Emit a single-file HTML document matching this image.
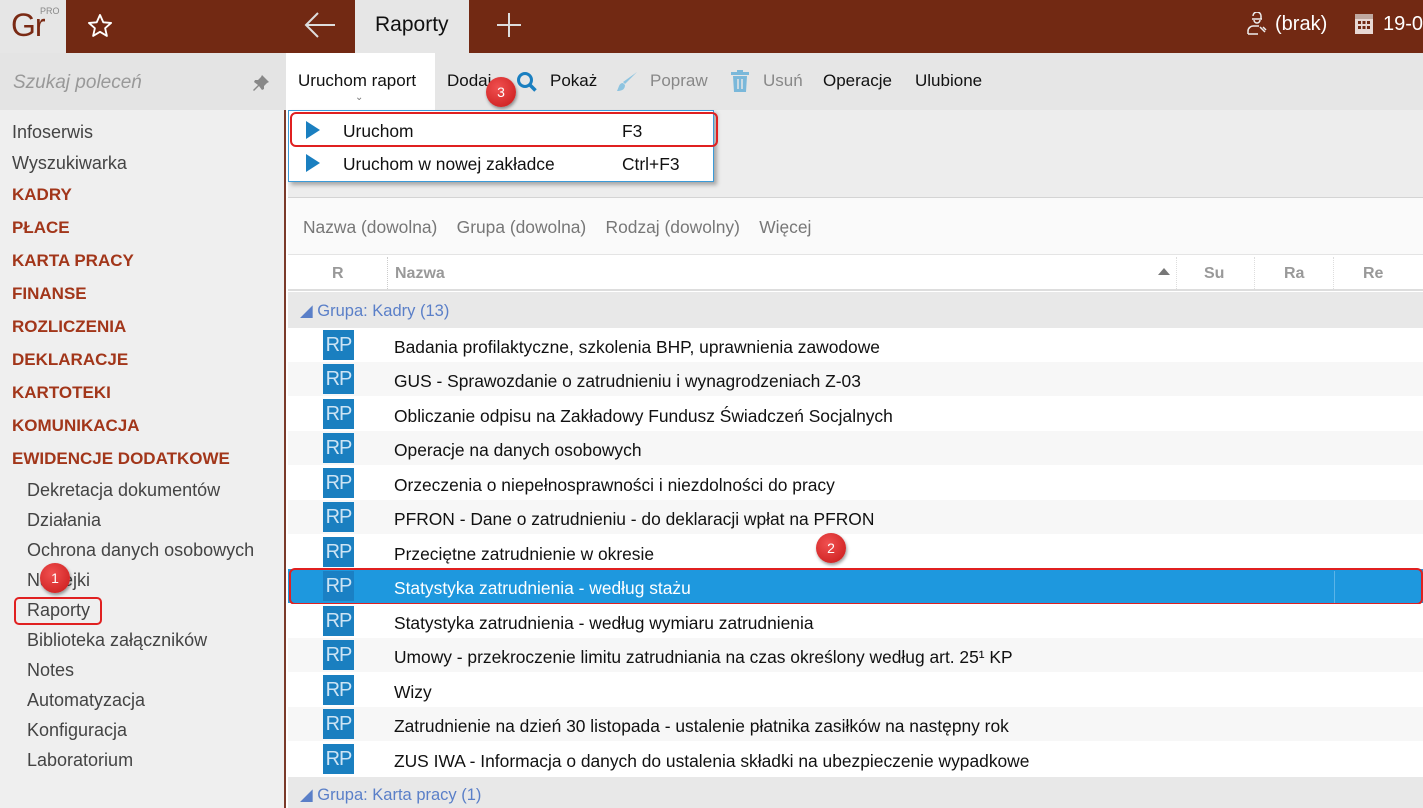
<!DOCTYPE html>
<html><head><meta charset="utf-8"><style>
*{margin:0;padding:0;box-sizing:border-box}
body{width:1423px;height:808px;overflow:hidden;font-family:"Liberation Sans",sans-serif;background:#fff;position:relative;font-size:17px;color:#111}
.a{position:absolute;white-space:nowrap}
.top{left:0;top:0;width:1423px;height:53px;background:#722913}
.side{left:0;top:53px;width:286px;height:755px;background:#efefef;border-right:2px solid #7a3a2a}
.si{position:absolute;left:12px;font-size:18px;color:#444}
.cat{color:#a2361a;font-weight:bold;font-size:17px}
.sub{left:27px}
.row{position:absolute;left:288px;width:1135px;height:34px}
.rp{position:absolute;left:35px;top:2px;width:31px;height:30px;background:#1a7fc0;color:#cde4f4;font-size:20px;text-align:center;line-height:30px;letter-spacing:-1px}
.rt{position:absolute;left:106px;top:9px;font-size:17.4px;color:#111}
.badge{position:absolute;width:30px;height:30px;border-radius:50%;background:radial-gradient(circle at 40% 35%,#f05050,#c81818);color:#fff;font-size:14px;text-align:center;line-height:30px;box-shadow:1px 2px 3px rgba(0,0,0,.4)}
</style></head><body>
<div class="a top"></div>
<div class="a" style="left:0;top:0;width:66px;height:53px;background:#e6e6e6"></div>
<div class="a" style="left:11px;top:7px;font-size:32px;color:#7a2a14;letter-spacing:-1px">Gr</div>
<div class="a" style="left:40px;top:6px;font-size:9px;color:#888">PRO</div>
<svg class="a" style="left:86px;top:12px" width="28" height="28" viewBox="0 0 24 24"><path d="M12 2.5l2.8 6.3 6.7.6-5.1 4.5 1.5 6.6L12 17l-5.9 3.5 1.5-6.6L2.5 9.4l6.7-.6z" fill="none" stroke="#fff" stroke-width="1.6" stroke-linejoin="round"/></svg>
<svg class="a" style="left:303px;top:11px" width="34" height="28" viewBox="0 0 34 28"><path d="M32 14H3M15 2L3 14l12 12" fill="none" stroke="#ddd" stroke-width="2"/></svg>
<div class="a" style="left:355px;top:0;width:114px;height:53px;background:#e6e6e6"></div>
<div class="a" style="left:375px;top:13px;font-size:21px;color:#111">Raporty</div>
<svg class="a" style="left:495px;top:11px" width="28" height="28"><path d="M14 2v24M2 14h24" stroke="#ddd" stroke-width="2"/></svg>
<svg class="a" style="left:1245px;top:12px" width="24" height="24" viewBox="0 0 24 24"><path d="M8 4a4 4 0 0 1 8 0v3M7 7h10M9 8a3 3 0 0 0 6 0M3 22v-3c0-3 3-5 5-5h6M3 22h10M15 15l5 5M18 15l3 3" fill="none" stroke="#eee" stroke-width="1.5"/></svg>
<div class="a" style="left:1275px;top:13px;font-size:20px;color:#fff">(brak)</div>
<svg class="a" style="left:1354px;top:13px" width="20" height="22"><rect x="1" y="1" width="18" height="20" fill="#e8d8d4"/><rect x="1" y="1" width="18" height="5" fill="#bfa8a0"/><g fill="#722913"><rect x="4" y="8" width="3" height="3"/><rect x="8.5" y="8" width="3" height="3"/><rect x="13" y="8" width="3" height="3"/><rect x="4" y="13" width="3" height="3"/><rect x="8.5" y="13" width="3" height="3"/><rect x="13" y="13" width="3" height="3"/></g></svg>
<div class="a" style="left:1383px;top:13px;font-size:20px;color:#fff">19-0</div>

<div class="a side"></div>
<div class="a" style="left:0;top:53px;width:286px;height:57px;background:#e4e4e4"></div>
<div class="a" style="left:13px;top:72px;font-size:19px;color:#999;font-style:italic">Szukaj poleceń</div>
<svg class="a" style="left:252px;top:74px" width="18" height="18" viewBox="0 0 18 18"><path d="M10 1l7 7-2 1-3 3 0 3-2 1-3-4-5 5-1-1 5-5-4-3 1-2h3l3-3z" fill="#888"/></svg>
<div class="si" style="top:122px">Infoserwis</div>
<div class="si" style="top:153px">Wyszukiwarka</div>
<div class="si cat" style="top:185px">KADRY</div>
<div class="si cat" style="top:218px">PŁACE</div>
<div class="si cat" style="top:251px">KARTA PRACY</div>
<div class="si cat" style="top:284px">FINANSE</div>
<div class="si cat" style="top:317px">ROZLICZENIA</div>
<div class="si cat" style="top:350px">DEKLARACJE</div>
<div class="si cat" style="top:383px">KARTOTEKI</div>
<div class="si cat" style="top:416px">KOMUNIKACJA</div>
<div class="si cat" style="top:449px">EWIDENCJE DODATKOWE</div>
<div class="si sub" style="top:480px">Dekretacja dokumentów</div>
<div class="si sub" style="top:510px">Działania</div>
<div class="si sub" style="top:540px">Ochrona danych osobowych</div>
<div class="si sub" style="top:570px">Naklejki</div>
<div class="si sub" style="top:600px">Raporty</div>
<div class="si sub" style="top:630px">Biblioteka załączników</div>
<div class="si sub" style="top:660px">Notes</div>
<div class="si sub" style="top:690px">Automatyzacja</div>
<div class="si sub" style="top:720px">Konfiguracja</div>
<div class="si sub" style="top:750px">Laboratorium</div>
<div class="a" style="left:14px;top:597px;width:88px;height:28px;border:2px solid #e02020;border-radius:5px"></div>
<div class="badge" style="left:40px;top:563px">1</div>

<div class="a" style="left:288px;top:53px;width:1135px;height:57px;background:#e6e6e6"></div>
<div class="a" style="left:288px;top:53px;width:147px;height:57px;background:#fff"></div>
<div class="a" style="left:298px;top:71px;font-size:17px">Uruchom raport</div>
<div class="a" style="left:355px;top:92px;font-size:10px;color:#777">⌄</div>
<div class="a" style="left:447px;top:71px;font-size:17px">Dodaj</div>
<svg class="a" style="left:516px;top:71px" width="22" height="22"><circle cx="9" cy="9" r="6.5" fill="none" stroke="#1a7fc0" stroke-width="3"/><path d="M13.5 13.5l6 6" stroke="#1a7fc0" stroke-width="3.5"/></svg>
<div class="a" style="left:550px;top:71px;font-size:17px">Pokaż</div>
<svg class="a" style="left:615px;top:70px" width="24" height="24"><path d="M22 2L10 14l-2-2z" fill="#8ec4e0"/><path d="M8 13c-4 0-4 4-6 8 4 0 8-1 8-6z" fill="#8ec4e0"/></svg>
<div class="a" style="left:650px;top:71px;font-size:17px;color:#888">Popraw</div>
<svg class="a" style="left:731px;top:70px" width="18" height="22"><rect x="0" y="2" width="18" height="3" fill="#7ab8da"/><rect x="6" y="0" width="6" height="3" fill="#7ab8da"/><path d="M2 6h14l-1 16H3z" fill="#7ab8da"/><path d="M7 9v10M11 9v10" stroke="#e6e6e6" stroke-width="1.5"/></svg>
<div class="a" style="left:763px;top:71px;font-size:17px;color:#888">Usuń</div>
<div class="a" style="left:823px;top:71px;font-size:17px">Operacje</div>
<div class="a" style="left:915px;top:71px;font-size:17px">Ulubione</div>
<div class="badge" style="left:486px;top:77px">3</div>

<div class="a" style="left:288px;top:110px;width:1135px;height:88px;background:#ededed;border-bottom:1px solid #d4d4d4"></div>
<div class="a" style="left:288px;top:110px;width:426px;height:72px;background:#fff;border:1px solid #3a9ad8;box-shadow:3px 3px 4px rgba(0,0,0,.3)"></div>
<svg class="a" style="left:306px;top:121px" width="14" height="18"><path d="M0 0l14 9-14 9z" fill="#1a7fc0"/></svg>
<div class="a" style="left:343px;top:121px;font-size:17.4px">Uruchom</div>
<div class="a" style="left:622px;top:121px;font-size:17.4px">F3</div>
<svg class="a" style="left:306px;top:154px" width="14" height="18"><path d="M0 0l14 9-14 9z" fill="#1a7fc0"/></svg>
<div class="a" style="left:343px;top:154px;font-size:17.4px">Uruchom w nowej zakładce</div>
<div class="a" style="left:622px;top:154px;font-size:17.4px">Ctrl+F3</div>
<div class="a" style="left:290px;top:112px;width:428px;height:35px;border:2px solid #e02020;border-radius:6px"></div>

<div class="a" style="left:288px;top:198px;width:1135px;height:56px;background:#fafafa"></div>
<div class="a" style="left:303px;top:217px;font-size:17.4px;color:#777">Nazwa (dowolna)&nbsp;&nbsp;&nbsp; Grupa (dowolna)&nbsp;&nbsp;&nbsp; Rodzaj (dowolny)&nbsp;&nbsp;&nbsp; Więcej</div>
<div class="a" style="left:288px;top:254px;width:1135px;height:37px;background:#fff;border-top:1px solid #e4e4e4;border-bottom:2px solid #ddd"></div>
<div class="a" style="left:332px;top:265px;font-size:16px;color:#999;font-weight:bold">R</div>
<div class="a" style="left:387px;top:257px;height:32px;border-left:1px dotted #ccc"></div>
<div class="a" style="left:395px;top:265px;font-size:16px;color:#999;font-weight:bold">Nazwa</div>
<div class="a" style="left:1158px;top:268px;width:0;height:0;border-left:6px solid transparent;border-right:6px solid transparent;border-bottom:7px solid #777"></div>
<div class="a" style="left:1176px;top:257px;height:32px;border-left:1px dotted #ddd"></div>
<div class="a" style="left:1204px;top:265px;font-size:16px;color:#999;font-weight:bold">Su</div>
<div class="a" style="left:1254px;top:257px;height:32px;border-left:1px dotted #ddd"></div>
<div class="a" style="left:1284px;top:265px;font-size:16px;color:#999;font-weight:bold">Ra</div>
<div class="a" style="left:1333px;top:257px;height:32px;border-left:1px dotted #ddd"></div>
<div class="a" style="left:1363px;top:265px;font-size:16px;color:#999;font-weight:bold">Re</div>

<div class="a" style="left:288px;top:292px;width:1135px;height:36px;background:#e8e8e8"></div>
<div class="a" style="left:300px;top:301px;font-size:16.5px;color:#5a7fc8">◢ Grupa: Kadry (13)</div>

<div class="row" style="top:328px;background:#fff"><div class="rp">RP</div><div class="rt">Badania profilaktyczne, szkolenia BHP, uprawnienia zawodowe</div></div>
<div class="row" style="top:362px;background:#f7f7f7"><div class="rp">RP</div><div class="rt">GUS - Sprawozdanie o zatrudnieniu i wynagrodzeniach Z-03</div></div>
<div class="row" style="top:397px;background:#fff"><div class="rp">RP</div><div class="rt">Obliczanie odpisu na Zakładowy Fundusz Świadczeń Socjalnych</div></div>
<div class="row" style="top:431px;background:#f7f7f7"><div class="rp">RP</div><div class="rt">Operacje na danych osobowych</div></div>
<div class="row" style="top:466px;background:#fff"><div class="rp">RP</div><div class="rt">Orzeczenia o niepełnosprawności i niezdolności do pracy</div></div>
<div class="row" style="top:500px;background:#f7f7f7"><div class="rp">RP</div><div class="rt">PFRON - Dane o zatrudnieniu - do deklaracji wpłat na PFRON</div></div>
<div class="row" style="top:535px;background:#fff"><div class="rp">RP</div><div class="rt">Przeciętne zatrudnienie w okresie</div></div>
<div class="row" style="top:569px;background:#1e98de"><div class="rp" style="background:#1a80c4">RP</div><div class="rt" style="color:#fff">Statystyka zatrudnienia - według stażu</div></div>
<div class="a" style="left:1334px;top:571px;height:32px;border-left:1px solid #5ab4e8"></div>
<div class="a" style="left:289px;top:568px;width:1134px;height:37px;border:2px solid #e02020;border-radius:6px"></div>
<div class="row" style="top:604px;background:#fff"><div class="rp">RP</div><div class="rt">Statystyka zatrudnienia - według wymiaru zatrudnienia</div></div>
<div class="row" style="top:638px;background:#f7f7f7"><div class="rp">RP</div><div class="rt">Umowy - przekroczenie limitu zatrudniania na czas określony według art. 25¹ KP</div></div>
<div class="row" style="top:673px;background:#fff"><div class="rp">RP</div><div class="rt">Wizy</div></div>
<div class="row" style="top:707px;background:#f7f7f7"><div class="rp">RP</div><div class="rt">Zatrudnienie na dzień 30 listopada - ustalenie płatnika zasiłków na następny rok</div></div>
<div class="row" style="top:742px;background:#fff"><div class="rp">RP</div><div class="rt">ZUS IWA - Informacja o danych do ustalenia składki na ubezpieczenie wypadkowe</div></div>
<div class="a" style="left:288px;top:777px;width:1135px;height:31px;background:#e8e8e8"></div>
<div class="a" style="left:300px;top:785px;font-size:16.5px;color:#5a7fc8">◢ Grupa: Karta pracy (1)</div>
<div class="badge" style="left:816px;top:533px">2</div>
</body></html>
